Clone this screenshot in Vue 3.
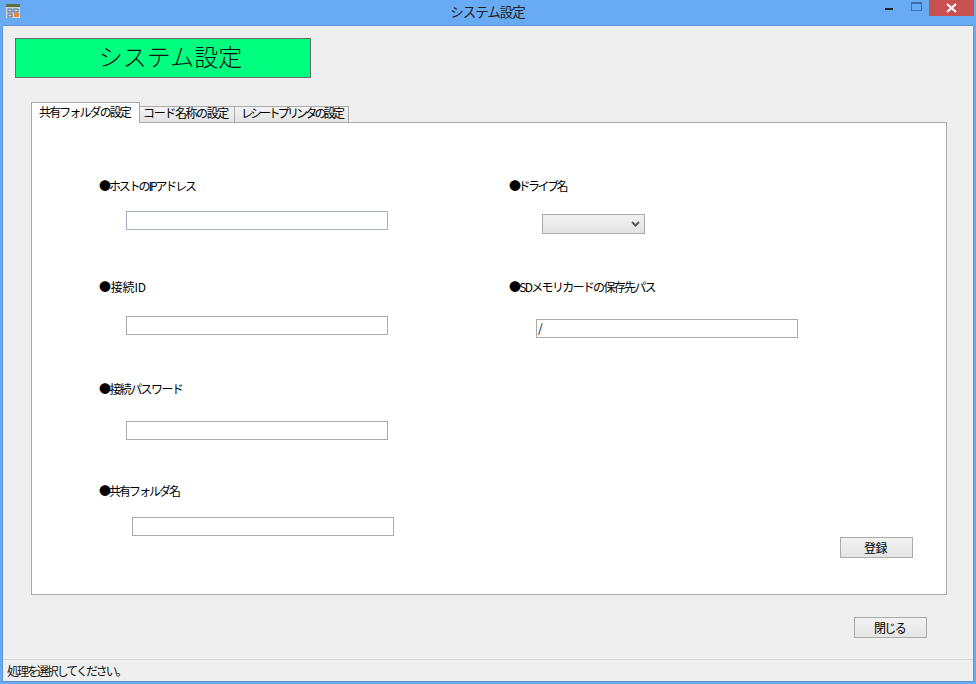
<script setup>
const leftFields = [
  { label: '接続ID', cls: 'f2', sp: 'ls-id' },
  { label: '接続パスワード', cls: 'f3', sp: 'ls-pw' },
]
</script>

<template>
  <div class="window">
    <header class="titlebar">
      <svg class="app-icon" width="16" height="16" viewBox="0 0 16 16">
        <rect x="1" y="1" width="14" height="14" fill="#d9d4c4" />
        <rect x="1" y="1" width="14" height="3" fill="#5d6f45" />
        <rect x="3" y="6" width="4" height="3" fill="none" stroke="#3f6fb5" />
        <rect x="9" y="6" width="4" height="3" fill="none" stroke="#3f6fb5" />
        <rect x="3" y="11" width="4" height="3" fill="none" stroke="#3f6fb5" />
        <rect x="9" y="10" width="5" height="4" fill="#ec8a2e" />
      </svg>
      <span class="title">システム設定</span>
      <div class="controls">
        <span class="min"></span>
        <span class="max"></span>
        <span class="close">
          <svg width="13" height="10" viewBox="0 0 13 10">
            <path d="M2 1 L11 9 M11 1 L2 9" stroke="#fff" stroke-width="2" fill="none" />
          </svg>
        </span>
      </div>
    </header>

    <main class="client">
      <div class="content">
        <h1 class="banner">システム設定</h1>

        <nav class="tabs">
          <span class="tab active">共有フォルダの設定</span>
          <span class="tab t2">コード名称の設定</span>
          <span class="tab t3">レシートプリンタの設定</span>
        </nav>

        <section class="panel">
          <div class="columns">
            <div class="col-left">
              <div class="field f1">
                <label class="ls-host">●ホストのIPアドレス</label>
                <input class="text focus" type="text" />
              </div>
              <div v-for="f in leftFields" :key="f.label" class="field" :class="f.cls">
                <label :class="f.sp">●{{ f.label }}</label>
                <input class="text" type="text" />
              </div>
              <div class="field f4">
                <label class="ls-share">●共有フォルダ名</label>
                <input class="text shifted" type="text" />
              </div>
            </div>
            <div class="col-right">
              <div class="field r1">
                <label class="ls-drive">●ドライブ名</label>
                <span class="select-wrap">
                  <select class="select"></select>
                  <svg class="chev" width="9" height="6" viewBox="0 0 9 6">
                    <path d="M1 1 L4.5 4.5 L8 1" stroke="#5a5a5a" stroke-width="2" fill="none" />
                  </svg>
                </span>
              </div>
              <div class="field r2">
                <label class="ls-path">●SDメモリカードの保存先パス</label>
                <input class="text path" type="text" value="/" />
              </div>
            </div>
          </div>
          <div class="panel-actions">
            <button class="btn" type="button">登録</button>
          </div>
        </section>

        <div class="footer-actions">
          <button class="btn close-btn" type="button">閉じる</button>
        </div>
      </div>

      <footer class="status">処理を選択してください。</footer>
    </main>
  </div>
</template>

<style>
html, body { margin: 0; padding: 0; background: #69aaf5; }
</style>

<style scoped>
.window {
  width: 976px;
  height: 684px;
  box-sizing: border-box;
  display: flex;
  flex-direction: column;
  background: #69aaf5;
  font-family: "Noto Sans CJK JP", "Liberation Sans", sans-serif;
  font-size: 12px;
  color: #000;
  overflow: hidden;
}
.titlebar {
  height: 26px;
  flex: none;
  display: flex;
  position: relative;
  justify-content: center;
}
.app-icon { position: absolute; left: 5px; top: 3px; }
.title {
  font-size: 13.5px;
  line-height: 23px;
  color: #222;
  letter-spacing: -1px;
  margin-left: -1px;
}
.controls {
  position: absolute;
  right: 2px;
  top: 0;
  display: flex;
  align-items: flex-start;
}
.min { width: 8px; height: 2px; background: #222; margin: 8px 18px 0 0; }
.max {
  width: 9px; height: 6px; margin: 2px 7px 0 0;
  border: 1px solid #3f6ea6; border-top-width: 2px;
}
.close {
  width: 45px; height: 16px; background: #c75050;
  display: flex; align-items: center; justify-content: center;
}
.client {
  flex: 1;
  margin: 0 3px 3px;
  background: #efefef;
  box-shadow: 0 -1px 0 #5f93d0, -1px 0 0 #5f93d0, 1px 0 0 #5f93d0, 0 1px 0 #5f93d0;
  display: flex;
  flex-direction: column;
  min-height: 0;
}
.content { flex: 1; padding: 12px 26px 0 12px; }
.banner {
  margin: 0;
  width: 296px;
  height: 40px;
  box-sizing: border-box;
  padding-left: 15px;
  background: #00ff7f;
  border: 1px solid #6b6b6b;
  font-size: 24px;
  font-weight: 300;
  line-height: 34px;
  text-align: center;
  color: #111;
}
.tabs {
  display: flex;
  align-items: flex-end;
  margin: 24px 0 0 16px;
  height: 21px;
  position: relative;
  z-index: 1;
}
.tab {
  height: 17px;
  box-sizing: border-box;
  border: 1px solid #aaa;
  border-left-width: 0;
  background: linear-gradient(#f3f3f3, #e4e4e4);
  line-height: 12px;
  white-space: nowrap;
  text-align: center;
}
.tab.active {
  width: 109px;
  height: 21px;
  padding-right: 2px;
  border-left-width: 1px;
  border-bottom: 0;
  background: #fff;
  line-height: 18px;
  letter-spacing: -1.9px;
}
.t2 { width: 95px; padding-right: 3px; letter-spacing: -1.4px; }
.t3 { width: 114px; letter-spacing: -2.8px; }
.panel {
  margin: -1px 0 0 16px;
  width: 916px;
  height: 473px;
  box-sizing: border-box;
  background: #fff;
  border: 1px solid #aaa;
  display: flex;
  flex-direction: column;
}
.columns { display: flex; flex: none; padding-left: 67px; }
.col-left { width: 410px; }
.col-right { flex: 1; }
.field { display: flex; flex-direction: column; align-items: flex-start; }
.field label { line-height: 16px; white-space: nowrap; }
.f1 { margin-top: 55px; gap: 17px; }
.f2 { margin-top: 49px; gap: 21px; }
.f3 { margin-top: 46px; gap: 24px; }
.f4 { margin-top: 43px; gap: 18px; }
.r1 { margin-top: 55px; gap: 20px; }
.r2 { margin-top: 45px; gap: 24px; }
.ls-host { letter-spacing: -2.1px; }
.ls-id { letter-spacing: -0.2px; }
.ls-pw { letter-spacing: -1.6px; }
.ls-share { letter-spacing: -2px; }
.ls-drive { letter-spacing: -2.5px; }
.ls-path { letter-spacing: -1.7px; }
.text {
  width: 262px;
  height: 19px;
  box-sizing: border-box;
  margin: 0 0 0 27px;
  padding: 0 1px 2px;
  border: 1px solid #aaa;
  border-radius: 0;
  background: #fff;
  font: inherit;
  line-height: 15px;
  outline: none;
}
.focus { border-color: #a3b1c6; }
.shifted { margin-left: 33px; }
.path { margin-left: 27px; }
.select-wrap { position: relative; display: block; margin-left: 33px; height: 20px; }
.select {
  display: block;
  width: 103px;
  height: 20px;
  box-sizing: border-box;
  margin: 0;
  border: 1px solid #aaa;
  border-radius: 0;
  background: linear-gradient(#f2f2f2, #e3e3e3);
  appearance: none;
  outline: none;
}
.chev { position: absolute; right: 5px; top: 7px; pointer-events: none; }
.panel-actions { display: flex; justify-content: flex-end; margin-top: auto; padding: 0 33px 36px 0; }
.btn {
  width: 73px;
  height: 21px;
  box-sizing: border-box;
  border: 1px solid #aaa;
  border-radius: 0;
  background: linear-gradient(#f2f2f2, #e4e4e4);
  font: inherit;
  line-height: 18px;
  padding: 0 2px 0 0;
  letter-spacing: -0.4px;
  color: #000;
}
.close-btn { letter-spacing: -1.6px; }
.footer-actions { display: flex; justify-content: flex-end; margin-top: 22px; padding-right: 20px; }
.status {
  height: 22px;
  flex: none;
  box-sizing: border-box;
  border-top: 1px solid #d8d8d8;
  padding-left: 4px;
  line-height: 21px;
  letter-spacing: -2.05px;
  color: #111;
}
</style>
